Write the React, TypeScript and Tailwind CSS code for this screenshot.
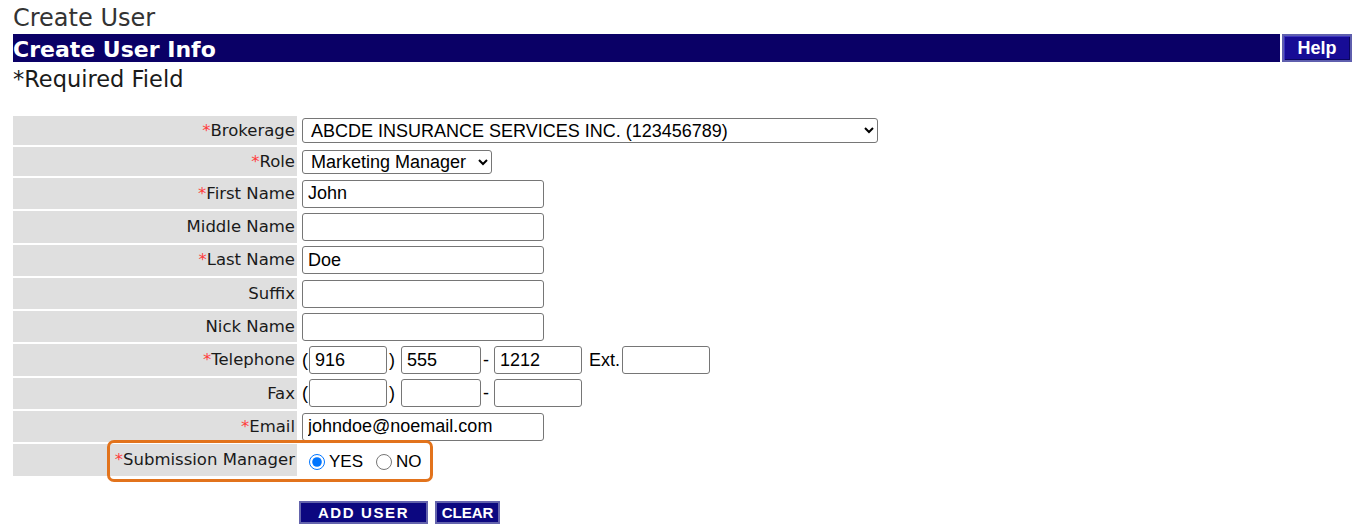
import type { ReactNode } from "react";

const labelFont = { fontFamily: '"DejaVu Sans", Verdana, sans-serif' };
const fieldFont = { fontFamily: '"Liberation Sans", Arial, sans-serif' };

const inputCls =
  "h-[28px] border border-[#767676] rounded-[3px] bg-white px-[5px] text-[18px] text-black outline-none";

interface RowProps {
  label: string;
  required?: boolean;
  tall?: boolean;
  children: ReactNode;
}

const Row = ({ label, required, tall = true, children }: RowProps) => (
  <div className={`flex ${tall ? "h-[31.3px]" : "h-[29px]"}`}>
    <div
      className="w-[284px] shrink-0 bg-[#dfdfdf] flex items-center justify-end pr-[2px] pt-px text-[16.5px] text-[#1a1a1a]"
      style={labelFont}
    >
      {required && <span className="text-[#ff3b3b]">*</span>}
      {label}
    </div>
    <div className="flex items-center pl-[5px] text-[18px] text-black" style={fieldFont}>
      {children}
    </div>
  </div>
);

export default function App() {
  return (
    <div className="relative w-[1362px] h-[531px] bg-white pl-[13px] pr-[10px] overflow-hidden">
      {/* Page title */}
      <div
        className="h-[34px] pt-[2px] leading-[32px] text-[24px] text-[#333]"
        style={labelFont}
      >
        Create User
      </div>

      {/* Section bar */}
      <div className="flex gap-[2px] h-[28px]">
        <div
          className="flex-1 bg-[#0a0066] text-white font-bold text-[22px] leading-[31px] overflow-hidden"
          style={labelFont}
        >
          Create User Info
        </div>
        <button
          className="w-[70px] h-[28px] bg-[#170c96] border-2 border-[#5f5fae] shadow-[inset_1px_1px_0_#3c34c0,inset_-1px_-1px_0_#0a0560] text-white font-bold text-[18px] leading-[22px]"
          style={fieldFont}
        >
          Help
        </button>
      </div>

      <div className="h-[28px] mt-[2px] pt-px leading-[28px] text-[22.5px] text-[#1a1a1a]" style={labelFont}>
        *Required Field
      </div>

      {/* Form table */}
      <div className="mt-[24px] flex flex-col gap-[2px]">
        <Row label="Brokerage" required tall={false}>
          <select
            className="w-[576px] h-[25px] border border-[#767676] rounded-[3px] bg-white pl-[4px] text-[18px] text-black"
            defaultValue="abcde"
          >
            <option value="abcde">ABCDE INSURANCE SERVICES INC. (123456789)</option>
          </select>
        </Row>
        <Row label="Role" required tall={false}>
          <select
            className="w-[190px] h-[24px] border border-[#767676] rounded-[3px] bg-white pl-[4px] text-[18px] text-black"
            defaultValue="mm"
          >
            <option value="mm">Marketing Manager</option>
          </select>
        </Row>
        <Row label="First Name" required>
          <input className={`${inputCls} w-[242px]`} defaultValue="John" />
        </Row>
        <Row label="Middle Name">
          <input className={`${inputCls} w-[242px]`} />
        </Row>
        <Row label="Last Name" required>
          <input className={`${inputCls} w-[242px]`} defaultValue="Doe" />
        </Row>
        <Row label="Suffix">
          <input className={`${inputCls} w-[242px]`} />
        </Row>
        <Row label="Nick Name">
          <input className={`${inputCls} w-[242px]`} />
        </Row>
        <Row label="Telephone" required>
          <span className="mr-px">(</span>
          <input className={`${inputCls} w-[78px]`} defaultValue="916" />
          <span className="ml-[2px] mr-[6px]">)</span>
          <input className={`${inputCls} w-[80px]`} defaultValue="555" />
          <span className="ml-[2px] mr-[5px]">-</span>
          <input className={`${inputCls} w-[88px]`} defaultValue="1212" />
          <span className="ml-[7px] mr-[2px]">Ext.</span>
          <input className={`${inputCls} w-[88px]`} />
        </Row>
        <Row label="Fax">
          <span className="mr-px">(</span>
          <input className={`${inputCls} w-[78px]`} />
          <span className="ml-[2px] mr-[6px]">)</span>
          <input className={`${inputCls} w-[80px]`} />
          <span className="ml-[2px] mr-[5px]">-</span>
          <input className={`${inputCls} w-[88px]`} />
        </Row>
        <Row label="Email" required>
          <input className={`${inputCls} w-[242px]`} defaultValue="johndoe@noemail.com" />
        </Row>
        <Row label="Submission Manager" required>
          <label className="flex items-center text-[17px] pt-[3px]">
            <input type="radio" name="sm" defaultChecked className="w-[16px] h-[16px] ml-[7px] mr-[4px]" />
            YES
          </label>
          <label className="flex items-center text-[17px] pt-[3px] ml-[13px]">
            <input type="radio" name="sm" className="w-[16px] h-[16px] mr-[4px]" />
            NO
          </label>
        </Row>
      </div>

      {/* Actions */}
      <div className="flex gap-[7px] mt-[25px] pl-[286px]" style={fieldFont}>
        <button className="w-[129px] h-[23px] bg-[#0c0780] border-2 border-[#6464ac] text-white font-bold text-[15px] tracking-[1.6px] leading-[19px]">
          ADD USER
        </button>
        <button className="w-[65px] h-[23px] bg-[#0c0780] border-2 border-[#6464ac] text-white font-bold text-[15px] leading-[19px]">
          CLEAR
        </button>
      </div>

      {/* Highlight annotation */}
      <div className="absolute left-[107px] top-[440px] w-[326px] h-[42px] border-[3px] border-[#e2731c] rounded-[7px] pointer-events-none" />
    </div>
  );
}
